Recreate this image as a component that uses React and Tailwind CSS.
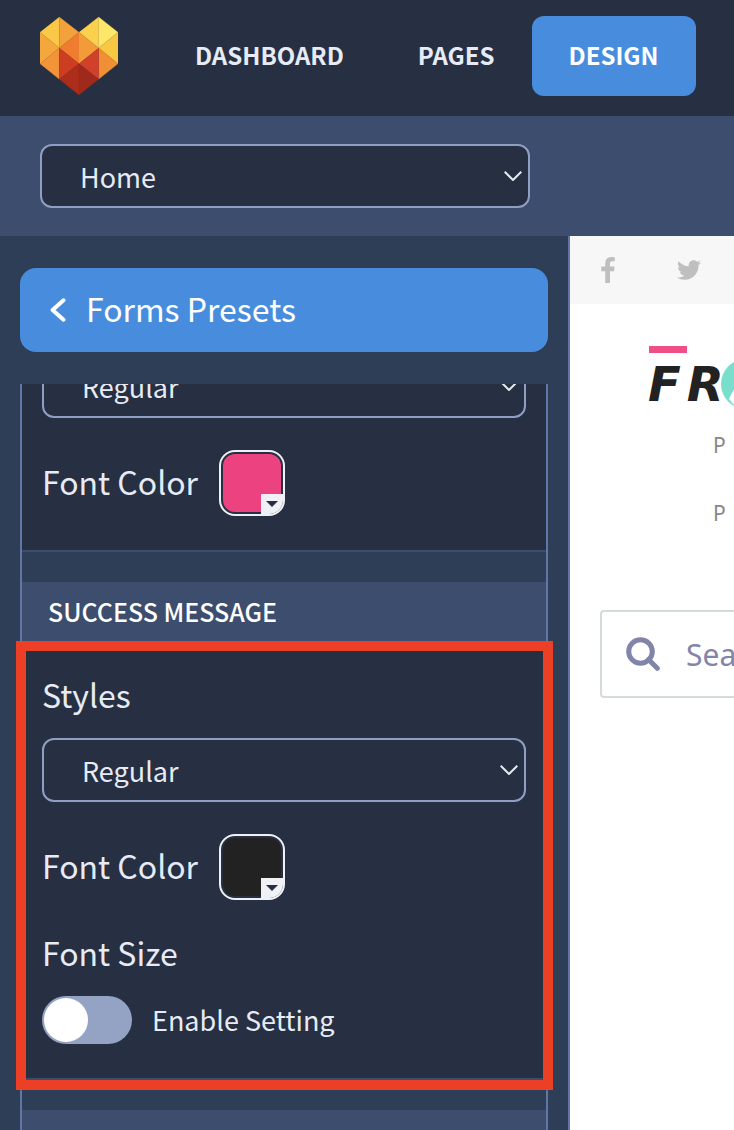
import React from "react";
import { FaTwitter } from "react-icons/fa";

const HEART = [
  ["0,46 58,0 58,93", "#f9c846"],
  ["58,0 117,46 58,93", "#f3a13a"],
  ["0,46 58,93 0,140", "#f4a83c"],
  ["0,140 58,93 58,187", "#f29437"],
  ["58,93 117,46 117,140", "#f07c30"],
  ["58,93 117,140 58,187", "#cc3d22"],
  ["58,187 117,140 117,234", "#ab2d1a"],
  ["117,46 176,0 176,93", "#fbd04d"],
  ["176,0 234,46 176,93", "#fde768"],
  ["234,46 234,140 176,93", "#f8c842"],
  ["117,46 176,93 117,140", "#f39b38"],
  ["176,93 234,140 176,187", "#f18f34"],
  ["117,140 176,93 176,187", "#d1402a"],
  ["117,140 176,187 117,234", "#9f2a1b"],
];

function HeartLogo() {
  return (
    <svg viewBox="0 0 234 234" className="size-[78px]" role="img" aria-label="Logo">
      {HEART.map(([points, fill]) => (
        <polygon key={points} points={points} fill={fill} stroke={fill} strokeWidth="0.6" />
      ))}
    </svg>
  );
}

function NavLink({ active, children }) {
  return (
    <a
      href="#"
      className={
        active
          ? "flex h-20 items-center rounded-xl bg-[#488ddd] px-[37px] pb-[2px] text-[24px] font-bold text-white"
          : "flex h-20 items-center px-[37px] pb-[2px] text-[24px] font-bold text-[#e6ebf5]"
      }
    >
      {children}
    </a>
  );
}

function Select({ label, option }) {
  return (
    <div className="relative">
      <select
        aria-label={label}
        className="block h-16 w-full appearance-none rounded-xl border-2 border-[#8f9ec3] bg-[#272f42] pl-[38px] pt-[2px] text-[27px] text-[#e6ebf5]"
      >
        <option>{option}</option>
      </select>
      <svg
        viewBox="0 0 18 10"
        className="pointer-events-none absolute right-2 top-[27px] h-[10px] w-[18px]"
        fill="none"
        stroke="#e2ebee"
        strokeWidth="2"
      >
        <path d="M0.7 0.7 9 9 17.3 0.7" />
      </svg>
    </div>
  );
}

function ColorField({ id, swatch }) {
  return (
    <div className="flex items-center gap-[21px]">
      <label htmlFor={id} className="pb-1 text-[32px] leading-[44px] text-[#e6ebf5]">
        Font Color
      </label>
      <button
        id={id}
        type="button"
        className="relative size-[66px] overflow-hidden rounded-2xl border-2 border-[#f0f1f6] p-[2px]"
      >
        <span className={`block size-full rounded-xl ${swatch}`} />
        <span className="absolute bottom-0 right-0 flex h-5 w-[22px] items-center justify-center bg-[#f0f1f6]">
          <svg viewBox="0 0 12 6" className="h-[6px] w-3">
            <path d="M0 0h12L6 6z" fill="#272f42" />
          </svg>
        </span>
      </button>
    </div>
  );
}

function Sidebar() {
  return (
    <aside className="flex w-[570px] shrink-0 flex-col border-r-2 border-[#6076a7] bg-[#2f3e57] px-5 pt-8">
      <button
        type="button"
        className="flex h-[84px] shrink-0 items-center gap-5 rounded-2xl bg-[#488ddd] pl-[30px] text-[32px] text-white"
      >
        <svg viewBox="0 0 16 24" className="h-6 w-4" fill="none" stroke="#fff" strokeWidth="4" strokeLinecap="round" strokeLinejoin="round">
          <path d="M13.5 2.3 2.6 12l10.900 9.700" />
        </svg>
        <span className="pb-1">Forms Presets</span>
      </button>

      <div className="mt-8 min-h-0 flex-1 overflow-x-visible overflow-y-clip border-x-2 border-[#6076a7]">
        <section className="-mt-[30px] border-b-2 border-[#3d4d6d] bg-[#272f42] px-5 pb-[34px]">
          <Select label="Previous styles" option="Regular" />
          <div className="mt-8">
            <ColorField id="first-color" swatch="bg-[#ec427f]" />
          </div>
        </section>

        <h2 className="mt-[30px] flex h-[62px] items-center bg-[#3d4d6d] pb-[2px] pl-[26px] text-[25px] font-medium text-white">
          SUCCESS MESSAGE
        </h2>
        <section className="relative border-b-2 border-[#3d4d6d] bg-[#272f42] px-5 pb-[34px] pt-7">
          <div className="text-[32px] leading-[44px] text-[#e6ebf5]">Styles</div>
          <div className="mt-[22px]">
            <Select label="Styles" option="Regular" />
          </div>
          <div className="mt-8">
            <ColorField id="success-color" swatch="bg-[#222222]" />
          </div>
          <div className="mt-[30px] text-[32px] leading-[44px] text-[#e6ebf5]">Font Size</div>
          <div className="mt-[22px] flex items-center gap-5">
            <input
              id="enable-size"
              type="checkbox"
              role="switch"
              className="h-12 w-[90px] appearance-none rounded-full bg-[#94a3c3] p-[2px] before:block before:size-11 before:rounded-full before:bg-white checked:before:ml-auto"
            />
            <label htmlFor="enable-size" className="text-[27px] leading-10 text-[#e6ebf5]">
              Enable Setting
            </label>
          </div>
          <div className="pointer-events-none absolute -bottom-3 -left-[6px] -right-[7px] -top-[3px] border-[10px] border-[#eb4026]" />
        </section>
        <div className="mt-[30px] h-[62px] bg-[#3d4d6d]" />
      </div>
    </aside>
  );
}

function Preview() {
  return (
    <main className="min-w-0 flex-1 overflow-hidden bg-white">
      <div className="flex h-[68px] items-center bg-[#f7f7f7] pl-[30px] text-[#bfbfbf]">
        <a href="#" aria-label="Facebook" className="mr-[61px] shrink-0">
          <svg viewBox="95 0 864 1664" className="h-[26px] w-4" fill="currentColor">
            <path d="M959 12v264h-157q-86 0-116 36t-30 108v189h293l-39 296h-254v759h-306v-759h-255v-296h255v-218q0-186 104-288.500t277-102.500q147 0 228 12z" />
          </svg>
        </a>
        <a href="#" aria-label="Twitter" className="shrink-0">
          <FaTwitter className="size-6" />
        </a>
      </div>

      <div className="pl-[78px] pt-[42px]">
        <div className="ml-[1px] h-[7px] w-[38px] bg-[#ee4f87]" />
        <div className="mt-1 flex h-[54px] items-center">
          <span className="flex w-[73px] shrink-0 gap-[6px] font-['DejaVu_Sans'] text-[48px] font-bold italic leading-[54px] text-[#222222]">
            <span>F</span>
            <span>R</span>
          </span>
          <svg viewBox="0 0 50 50" className="size-[50px] shrink-0">
            <circle cx="25" cy="25" r="25" fill="#78dfcd" />
            <path d="M16 25c-3 6-6 10-8 15l6 7 12-22z" fill="#fff" />
          </svg>
        </div>
      </div>

      <nav className="mt-5 flex flex-col gap-10 pl-[143px] font-['Noto_Sans'] text-[21px] leading-7 text-[#888888]">
        <a href="#">P</a>
        <a href="#">P</a>
      </nav>

      <form className="-mr-10 ml-[30px] mt-[83px] flex h-[88px] items-center gap-[26px] rounded border-2 border-[#d5dadd] pl-6">
        <svg viewBox="0 0 34 34" className="size-[34px] shrink-0" fill="none" stroke="#8285a8" strokeWidth="5">
          <circle cx="14.5" cy="14.5" r="11.8" />
          <path d="m22.500 22.500 8.800 8.800" strokeLinecap="round" />
        </svg>
        <input
          type="search"
          aria-label="Search"
          placeholder="Search"
          className="w-40 shrink-0 font-['Noto_Sans'] text-[30px] placeholder:text-[#8285a8]"
        />
      </form>
    </main>
  );
}

export default function App() {
  return (
    <div className="flex h-screen flex-col overflow-hidden bg-[#2f3e57] font-['Noto_Sans_CJK_SC',sans-serif]">
      <header className="flex h-[116px] shrink-0 items-center overflow-hidden bg-[#272f42] pb-1 pl-10">
        <div className="mr-10 shrink-0">
          <HeartLogo />
        </div>
        <nav className="flex">
          <NavLink>DASHBOARD</NavLink>
          <NavLink>PAGES</NavLink>
          <NavLink active>DESIGN</NavLink>
          <NavLink>M</NavLink>
        </nav>
      </header>
      <div className="h-[120px] shrink-0 bg-[#3d4d6d] pl-10 pt-7">
        <div className="w-[490px]">
          <Select label="Page" option="Home" />
        </div>
      </div>
      <div className="flex min-h-0 flex-1">
        <Sidebar />
        <Preview />
      </div>
    </div>
  );
}
